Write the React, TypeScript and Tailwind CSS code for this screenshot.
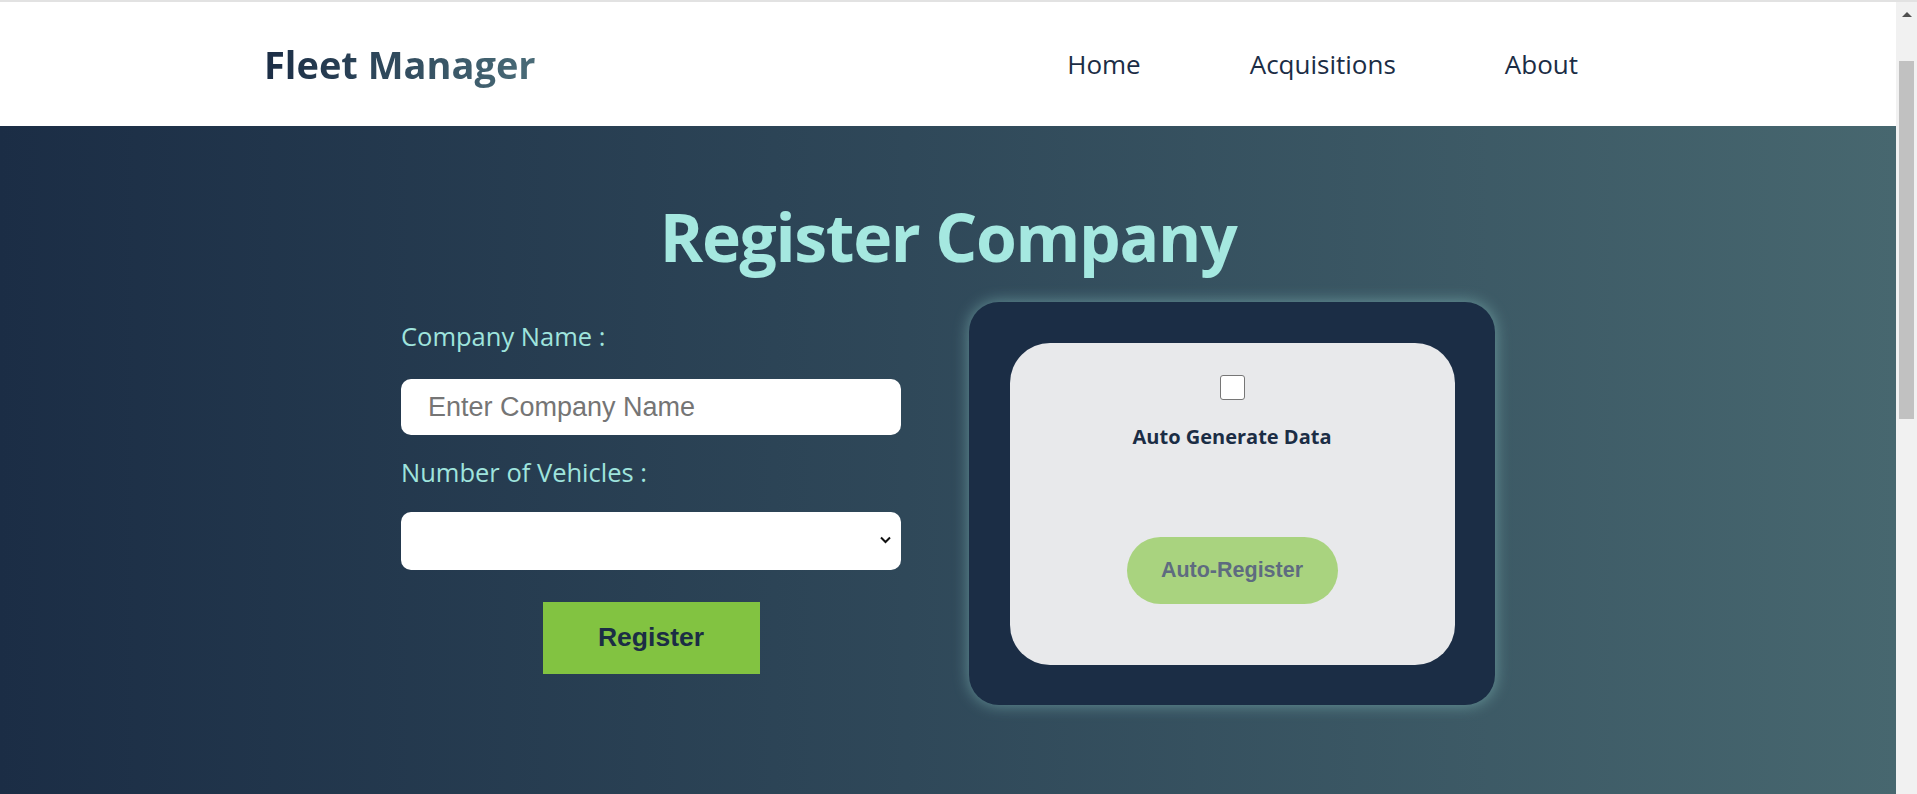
const Header = () => {
  return (
    <div className="flex h-[124px] items-center justify-between bg-white pl-[264px] pr-[318px]">
      <div className="bg-linear-to-r from-[#1b2d45] to-[#4a6c78] bg-clip-text text-[38px] font-bold text-transparent">
        Fleet Manager
      </div>
      <nav className="flex gap-[109px] text-[26px] text-[#1b2d45]">
        <a href="#">Home</a>
        <a href="#">Acquisitions</a>
        <a href="#">About</a>
      </nav>
    </div>
  );
};

const AutoCard = () => {
  return (
    <div className="flex h-[403px] w-[526px] items-center justify-center rounded-[30px] bg-[#1b2d45] shadow-[0_0_16px_rgba(165,232,224,0.45)]">
      <div className="flex h-[322px] w-[445px] flex-col items-center rounded-[40px] bg-[#e8e9eb] pt-[32px]">
        <input
          type="checkbox"
          className="h-[25px] w-[25px] appearance-none rounded-[3px] border border-[#767676] bg-white"
        />
        <div className="mt-[23px] text-[20px] leading-[27px] font-bold text-[#1b2d45]">Auto Generate Data</div>
        <button className="mt-[87px] h-[67px] w-[211px] rounded-full bg-[#a9d37f] font-['Liberation_Sans',Arial,sans-serif] text-[21.5px] font-bold text-[#5e6b80]">
          Auto-Register
        </button>
      </div>
    </div>
  );
};

const RegisterForm = () => {
  return (
    <div className="flex w-[500px] flex-col pt-[18px]">
      <label className="text-[25.5px] leading-[33px] text-[#9fe4dd]">Company Name :</label>
      <input
        className="mt-[26px] h-[56px] rounded-[10px] bg-white pl-[27px] font-['Liberation_Sans',Arial,sans-serif] text-[27px] outline-none placeholder:text-[#757575]"
        placeholder="Enter Company Name"
      />
      <label className="mt-[21px] text-[25.5px] leading-[33px] text-[#9fe4dd]">Number of Vehicles :</label>
      <div className="relative mt-[23px]">
        <select className="h-[58px] w-full appearance-none rounded-[10px] bg-white" />
        <svg
          className="absolute top-[24px] right-[10px]"
          width="11"
          height="8"
          viewBox="0 0 11 8"
          fill="none"
          stroke="#111"
          strokeWidth="2"
        >
          <path d="M1 1.5l4.5 4.5 4.5-4.5" />
        </svg>
      </div>
      <button className="mt-[32px] h-[72px] w-[217px] self-center bg-[#82c341] font-['Liberation_Sans',Arial,sans-serif] text-[26.5px] font-bold text-[#1b2d45]">
        Register
      </button>
    </div>
  );
};

const Scrollbar = () => {
  return (
    <div className="flex w-[21px] flex-col bg-[#f1f1f1]">
      <div className="flex h-[24px] items-center justify-center">
        <div className="h-0 w-0 border-x-[5px] border-b-[5px] border-x-transparent border-b-[#505050]" />
      </div>
      <div className="mx-[3px] mt-[35px] h-[358px] bg-[#c1c1c1]" />
    </div>
  );
};

export default function App() {
  return (
    <div className="flex h-[794px] w-[1917px] flex-col overflow-hidden bg-white font-['Open_Sans',sans-serif]">
      <div className="h-[2px] bg-[#e2e2e2]" />
      <div className="flex min-h-0 flex-1">
        <div className="flex flex-1 flex-col">
          <Header />
          <div className="flex flex-1 flex-col items-center bg-linear-to-r from-[#1b2d45] to-[#47676f] pt-[77px]">
            <h1 className="text-[66px] leading-none font-bold tracking-[-0.02em] text-[#a5e8e0]">Register Company</h1>
            <div className="mt-[33px] flex items-start gap-[68px]">
              <RegisterForm />
              <AutoCard />
            </div>
          </div>
        </div>
        <Scrollbar />
      </div>
    </div>
  );
}
